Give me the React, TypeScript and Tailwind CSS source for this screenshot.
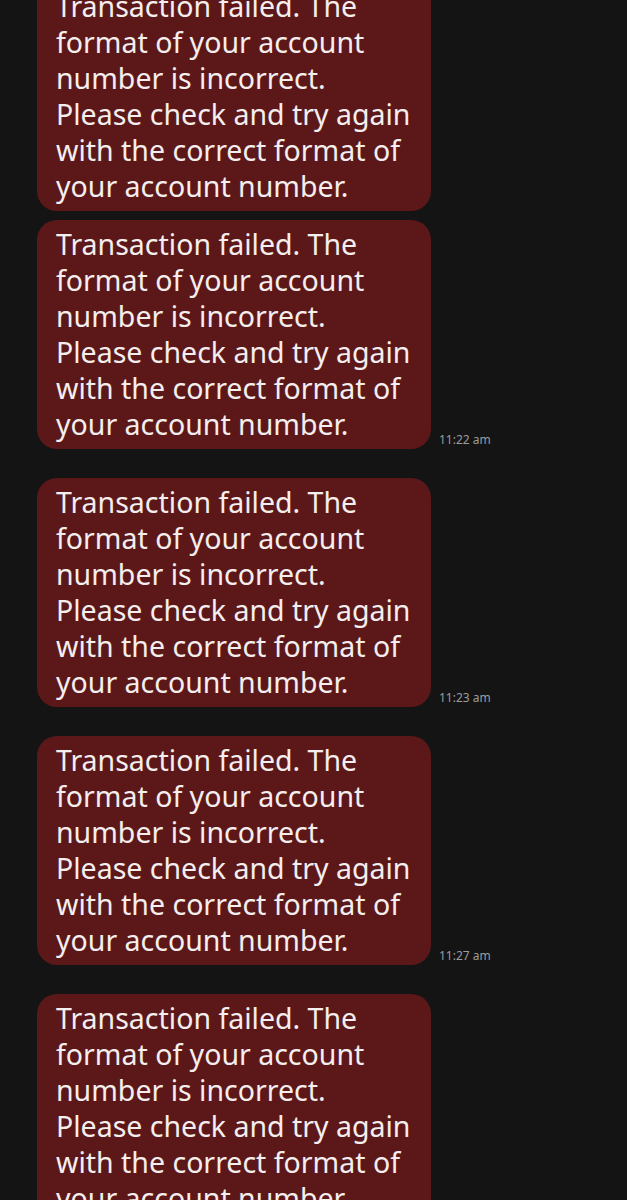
import React from "react";

const lines = [
  "Transaction failed. The",
  "format of your account",
  "number is incorrect.",
  "Please check and try again",
  "with the correct format of",
  "your account number.",
];

const messages: { id: number; time?: string }[] = [
  { id: 1 },
  { id: 2, time: "11:22 am" },
  { id: 3, time: "11:23 am" },
  { id: 4, time: "11:27 am" },
  { id: 5 },
];

const App: React.FC = () => {
  return (
    <div
      className="h-[1200px] w-full overflow-hidden bg-[#141414]"
      style={{ fontFamily: '"Noto Sans", "DejaVu Sans", sans-serif' }}
    >
      <div className="mt-[-18px] flex flex-col pl-[37px]">
        {messages.map((msg) => (
          <div
            key={msg.id}
            className={`flex items-end gap-[8px] ${msg.id === 1 ? "mb-[9px]" : "mb-[29px]"}`}
          >
            <div className="w-[394px] rounded-[20px] bg-[#5c1819] pl-[19px] pr-[10px] pt-[6px] pb-[7px] text-[28.5px] leading-[36px] text-[#f4eeee]">
              {lines.map((line) => (
                <span key={line} className="block whitespace-nowrap">
                  {line}
                </span>
              ))}
            </div>
            {msg.time && (
              <span className="mb-[1px] text-[12px] leading-[16px] text-[#9c9c9c]">
                {msg.time}
              </span>
            )}
          </div>
        ))}
      </div>
    </div>
  );
};

export default App;
